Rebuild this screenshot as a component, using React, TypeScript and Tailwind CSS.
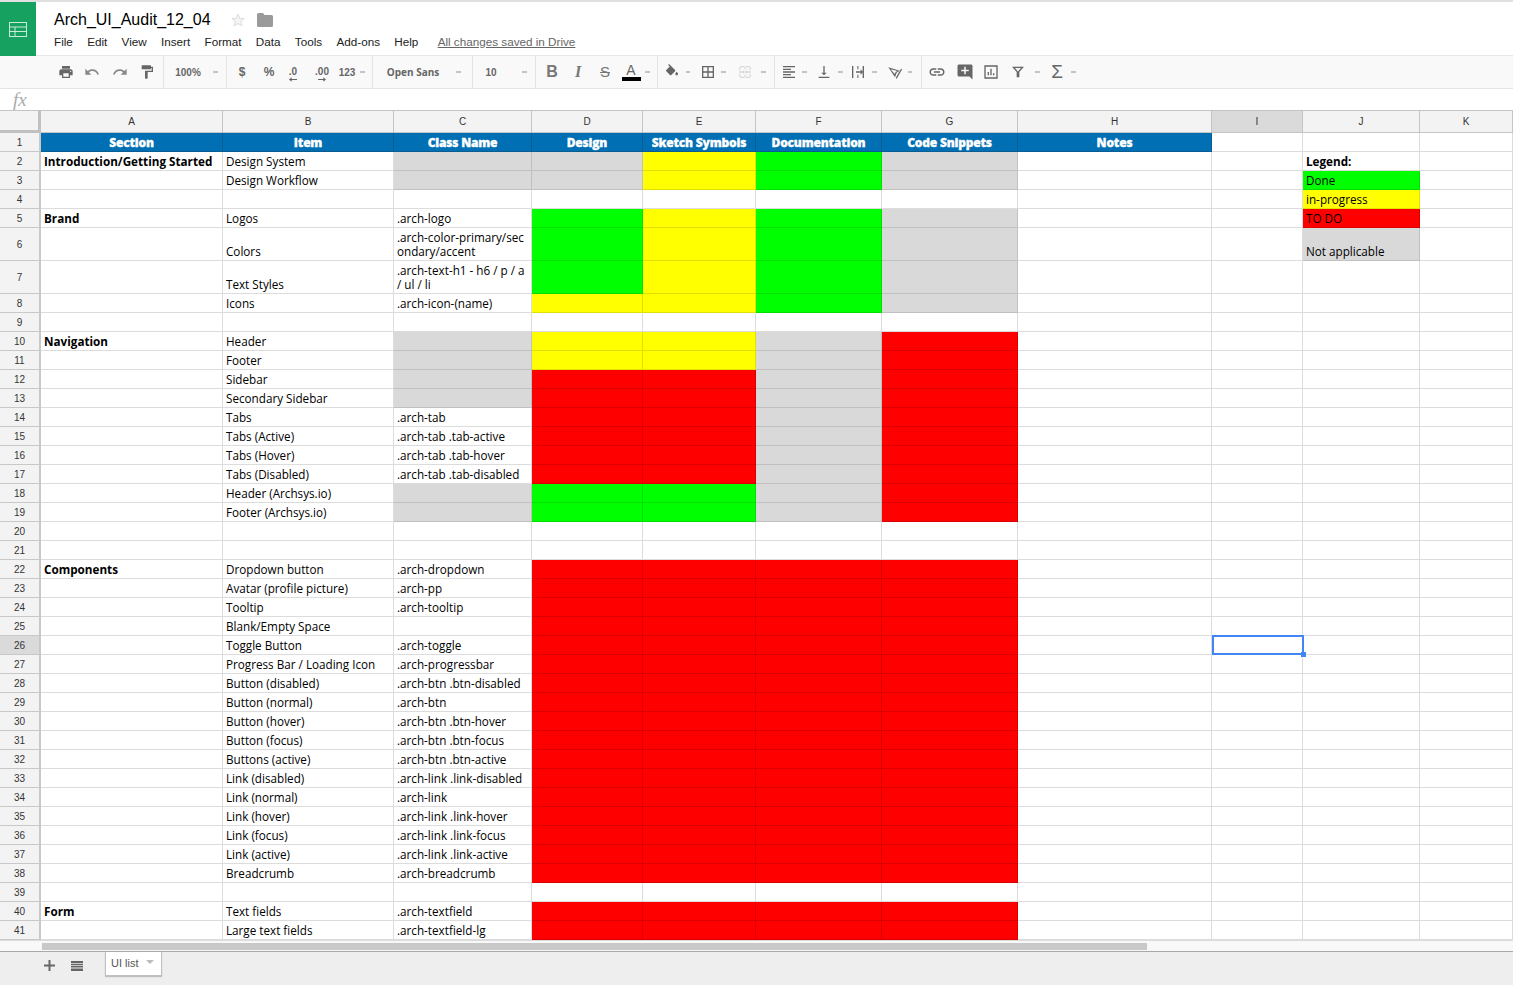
import React from "react";

type C = "" | "g" | "y" | "r" | "n";
type Row = { h?: boolean; s?: string; i?: string; c?: string; cc?: C; f?: [C, C, C, C] };

const R4: [C, C, C, C] = ["r", "r", "r", "r"];
const RN: [C, C, C, C] = ["r", "r", "n", "r"];
const GYGN: [C, C, C, C] = ["g", "y", "g", "n"];
const rows: Row[] = [
  { s: "Introduction/Getting Started", i: "Design System", cc: "n", f: ["n", "y", "g", "n"] },
  { i: "Design Workflow", cc: "n", f: ["n", "y", "g", "n"] },
  {},
  { s: "Brand", i: "Logos", c: ".arch-logo", f: GYGN },
  { h: true, i: "Colors", c: ".arch-color-primary/secondary/accent", f: GYGN },
  { h: true, i: "Text Styles", c: ".arch-text-h1 - h6 / p / a / ul / li", f: GYGN },
  { i: "Icons", c: ".arch-icon-(name)", f: ["y", "y", "g", "n"] },
  {},
  { s: "Navigation", i: "Header", cc: "n", f: ["y", "y", "n", "r"] },
  { i: "Footer", cc: "n", f: ["y", "y", "n", "r"] },
  { i: "Sidebar", cc: "n", f: RN },
  { i: "Secondary Sidebar", cc: "n", f: RN },
  { i: "Tabs", c: ".arch-tab", f: RN },
  { i: "Tabs (Active)", c: ".arch-tab .tab-active", f: RN },
  { i: "Tabs (Hover)", c: ".arch-tab .tab-hover", f: RN },
  { i: "Tabs (Disabled)", c: ".arch-tab .tab-disabled", f: RN },
  { i: "Header (Archsys.io)", cc: "n", f: ["g", "g", "n", "r"] },
  { i: "Footer (Archsys.io)", cc: "n", f: ["g", "g", "n", "r"] },
  {},
  {},
  { s: "Components", i: "Dropdown button", c: ".arch-dropdown", f: R4 },
  { i: "Avatar (profile picture)", c: ".arch-pp", f: R4 },
  { i: "Tooltip", c: ".arch-tooltip", f: R4 },
  { i: "Blank/Empty Space", f: R4 },
  { i: "Toggle Button", c: ".arch-toggle", f: R4 },
  { i: "Progress Bar / Loading Icon", c: ".arch-progressbar", f: R4 },
  { i: "Button (disabled)", c: ".arch-btn .btn-disabled", f: R4 },
  { i: "Button (normal)", c: ".arch-btn", f: R4 },
  { i: "Button (hover)", c: ".arch-btn .btn-hover", f: R4 },
  { i: "Button (focus)", c: ".arch-btn .btn-focus", f: R4 },
  { i: "Buttons (active)", c: ".arch-btn .btn-active", f: R4 },
  { i: "Link (disabled)", c: ".arch-link .link-disabled", f: R4 },
  { i: "Link (normal)", c: ".arch-link", f: R4 },
  { i: "Link (hover)", c: ".arch-link .link-hover", f: R4 },
  { i: "Link (focus)", c: ".arch-link .link-focus", f: R4 },
  { i: "Link (active)", c: ".arch-link .link-active", f: R4 },
  { i: "Breadcrumb", c: ".arch-breadcrumb", f: R4 },
  {},
  { s: "Form", i: "Text fields", c: ".arch-textfield", f: R4 },
  { i: "Large text fields", c: ".arch-textfield-lg", f: R4 },
];

const legend: Record<number, { t: string; c: C; b?: boolean }> = {
  2: { t: "Legend:", c: "", b: true },
  3: { t: "Done", c: "g" },
  4: { t: "in-progress", c: "y" },
  5: { t: "TO DO", c: "r" },
  6: { t: "Not applicable", c: "n" },
};

const fill: Record<C, string> = {
  "": "bg-white border-[#dcdcdc]",
  g: "bg-[#00ff00] border-[#00e000]",
  y: "bg-[#ffff00] border-[#e0e000]",
  r: "bg-[#ff0000] border-[#d80000]",
  n: "bg-[#d9d9d9] border-[#c0c0c0]",
};

const sans = "font-['Liberation_Sans',Arial,sans-serif]";
const open = "font-['Open_Sans',sans-serif]";

function Cell({ c = "", bold, wrap, children }: { c?: C; bold?: boolean; wrap?: boolean; children?: React.ReactNode }) {
  return (
    <div
      className={`${fill[c]} border-r border-b flex items-end pl-[3px] pr-[2px] text-[11.7px] leading-[14px] pb-[2px] text-black overflow-hidden ${open} ${
        bold ? "font-bold whitespace-nowrap" : wrap ? "break-all" : "whitespace-nowrap"
      }`}
    >
      <span className="block">{children}</span>
    </div>
  );
}

function Head({ children }: { children: React.ReactNode }) {
  return (
    <div className="bg-[#f3f3f3] border-r-2 border-b border-[#c8c8c8] flex items-center justify-center text-[10px] text-[#333] font-['Liberation_Sans',Arial,sans-serif]">
      {children}
    </div>
  );
}

function Ic({ d, className = "fill-[#666]", size = 16 }: { d: string; className?: string; size?: number }) {
  return (
    <svg viewBox="0 0 24 24" width={size} height={size} className={className}>
      <path d={d} fillRule="evenodd" />
    </svg>
  );
}

function Slot({ className, children }: { className: string; children?: React.ReactNode }) {
  return <div className={`flex items-center justify-center shrink-0 h-full ${className}`}>{children}</div>;
}

const Dash = () => <span className="block w-[5px] h-[2px] bg-[#c4c4c4]" />;
const Sep = () => <div className="w-px h-[32px] bg-[#e4e4e4] shrink-0" />;
const tb = `text-[10px] font-bold text-[#666] whitespace-nowrap ${sans}`;

function Toolbar() {
  return (
    <div className="h-[33px] bg-[#f9f9f9] border-b border-[#e4e4e4] flex items-start pl-[53px] shrink-0">
      <div className="flex items-center h-[32px]">
        <Slot className="w-[26px]"><Ic d="M19 8H5c-1.66 0-3 1.34-3 3v6h4v4h12v-4h4v-6c0-1.66-1.34-3-3-3zm-3 11H8v-5h8v5zm3-7c-.55 0-1-.45-1-1s.45-1 1-1 1 .45 1 1-.45 1-1 1zm-1-9H6v4h12V3z" /></Slot>
        <Slot className="w-[26px]"><Ic d="M12.5 8c-2.65 0-5.05.99-6.9 2.6L2 7v9h9l-3.62-3.62c1.39-1.16 3.16-1.88 5.12-1.88 3.54 0 6.55 2.31 7.6 5.5l2.37-.78C21.08 11.03 17.15 8 12.5 8z" className="fill-[#888]" /></Slot>
        <Slot className="w-[29px]"><Ic d="M18.4 10.6C16.55 8.99 14.15 8 11.5 8c-4.65 0-8.58 3.03-9.96 7.22L3.9 16c1.05-3.19 4.05-5.5 7.6-5.5 1.95 0 3.73.72 5.12 1.88L13 16h9V7l-3.6 3.6z" className="fill-[#888]" /></Slot>
        <Slot className="w-[26px]"><Ic d="M18 4V3c0-.55-.45-1-1-1H5c-.55 0-1 .45-1 1v4c0 .55.45 1 1 1h12c.55 0 1-.45 1-1V6h1v4H9v11c0 .55.45 1 1 1h2c.55 0 1-.45 1-1v-9h8V4h-3z" /></Slot>
        <div className="w-[3px]" />
        <Sep />
        <Slot className={`w-[48px] ${tb}`}>100%</Slot>
        <Slot className="w-[6px]"><Dash /></Slot>
        <div className="w-[8px]" />
        <Sep />
        <Slot className={`w-[30px] text-[12px] ${tb}`}>$</Slot>
        <Slot className={`w-[24px] text-[12px] ${tb}`}>%</Slot>
        <Slot className={`w-[24px] flex-col pt-[5px] ${tb}`}>
          <span className="leading-[10px]">.0</span>
          <svg width="8" height="5" viewBox="0 0 9 5" className="fill-[#666]"><path d="M0 2.5 3 0v2h6v1H3v2z" /></svg>
        </Slot>
        <Slot className={`w-[34px] flex-col pt-[5px] ${tb}`}>
          <span className="leading-[10px]">.00</span>
          <svg width="8" height="5" viewBox="0 0 9 5" className="fill-[#666]"><path d="M9 2.5 6 0v2H0v1h6v2z" /></svg>
        </Slot>
        <Slot className={`w-[16px] ${tb}`}>123</Slot>
        <Slot className="w-[14px]"><Dash /></Slot>
        <div className="w-[3px]" />
        <Sep />
        <Slot className={`w-[80px] ${tb}`}><span className={`${open} text-[10px]`}>Open Sans</span></Slot>
        <Slot className="w-[10px]"><Dash /></Slot>
        <div className="w-[9px]" />
        <Sep />
        <Slot className={`w-[36px] ${tb}`}>10</Slot>
        <div className="w-[10px]" />
        <Slot className="w-[10px]"><Dash /></Slot>
        <div className="w-[6px]" />
        <Sep />
        <Slot className="w-[32px] text-[16px] font-bold text-[#777]"><span className={sans}>B</span></Slot>
        <Slot className="w-[20px] text-[16px] italic font-bold text-[#777]"><span className="font-['Liberation_Serif',serif]">I</span></Slot>
        <Slot className="w-[34px] text-[15px] text-[#777] line-through"><span className={sans}>S</span></Slot>
        <Slot className="w-[18px] flex-col text-[#666]">
          <span className={`${sans} text-[14px] leading-[14px]`}>A</span>
          <span className="block w-[19px] h-[4px] bg-black" />
        </Slot>
        <Slot className="w-[14px]"><Dash /></Slot>
        <div className="w-[3px]" />
        <Sep />
        <Slot className="w-[28px]"><Ic d="M16.56 8.94L7.62 0 6.21 1.41l2.38 2.38-5.15 5.15c-.59.59-.59 1.54 0 2.12l5.5 5.5c.29.29.68.44 1.06.44s.77-.15 1.06-.44l5.5-5.5c.59-.58.59-1.53 0-2.12zM19 11.5s-2 2.17-2 3.5c0 1.1.9 2 2 2s2-.9 2-2c0-1.33-2-3.5-2-3.5z" /></Slot>
        <Slot className="w-[4px]"><Dash /></Slot>
        <Slot className="w-[16px] ml-[10px]"><Ic d="M3 3v18h18V3H3zm8 16H5v-6h6v6zm0-8H5V5h6v6zm8 8h-6v-6h6v6zm0-8h-6V5h6v6z" /></Slot>
        <Slot className="w-[14px]"><Dash /></Slot>
        <Slot className="w-[30px]"><Ic d="M3 3h18v2H3zM3 19h18v2H3zM3 3h2v6H3zM3 15h2v6H3zM19 3h2v6h-2zM19 15h2v6h-2zM11 3h2v5h-2zM11 16h2v5h-2zM3 11h6V9l3 3-3 3v-2H3zM21 11h-6V9l-3 3 3 3v-2h6z" className="fill-[#d8d8d8]" /></Slot>
        <Slot className="w-[6px]"><Dash /></Slot>
        <div className="w-[8px]" />
        <Sep />
        <Slot className="w-[16px] ml-[6px]"><Ic d="M3 3h18v2H3zM3 7h12v2H3zM3 11h18v2H3zM3 15h12v2H3zM3 19h18v2H3z" /></Slot>
        <Slot className="w-[14px]"><Dash /></Slot>
        <Slot className="w-[26px]"><Ic d="M16 13h-3V3h-2v10H8l4 4 4-4zM4 19v2h16v-2H4z" /></Slot>
        <Slot className="w-[6px]"><Dash /></Slot>
        <Slot className="w-[16px] ml-[7px]"><Ic d="M3 3h2v18H3zM19 3h2v18h-2zM11 3h1.600v5H11zM11 16h1.600v5H11zM9 11h7V8l4 4-4 4v-3H9z" /></Slot>
        <Slot className="w-[16px]"><Dash /></Slot>
        <Slot className="w-[26px]"><Ic d="M2 5l17 5-4.5 3L12 20zM5.5 8l6 7 1.5-3 2.5-1.5zM13 21L21 7l1.700 1-8 14z" /></Slot>
        <Slot className="w-[4px]"><Dash /></Slot>
        <div className="w-[9px]" />
        <Sep />
        <Slot className="w-[30px]"><Ic d="M3.9 12c0-1.71 1.39-3.1 3.1-3.1h4V7H7c-2.76 0-5 2.24-5 5s2.24 5 5 5h4v-1.9H7c-1.71 0-3.1-1.39-3.1-3.1zM8 13h8v-2H8v2zm9-6h-4v1.9h4c1.71 0 3.1 1.39 3.1 3.1s-1.39 3.1-3.1 3.1h-4V17h4c2.76 0 5-2.24 5-5s-2.24-5-5-5z" size={18} /></Slot>
        <Slot className="w-[26px]"><Ic d="M20 2H4c-1.1 0-2 .9-2 2v12c0 1.1.9 2 2 2h14l4 4V4c0-1.1-.9-2-2-2zm-3 9h-4v4h-2v-4H7V9h4V5h2v4h4v2z" size={18} /></Slot>
        <Slot className="w-[26px]"><Ic d="M2 2h20v20H2zM4 4v16h16V4zM7 12h2v5H7zM11 7h2v10h-2zM15 14h2v3h-2z" /></Slot>
        <Slot className="w-[28px]"><Ic d="M3 4h18l-7 8v8h-4v-8zM7.5 6l4.5 5.2L16.5 6z" /></Slot>
        <Slot className="w-[10px]"><Dash /></Slot>
        <Slot className="w-[16px] ml-[7px] text-[19px] text-[#666]"><span className={sans}>Σ</span></Slot>
        <Slot className="w-[16px]"><Dash /></Slot>
      </div>
    </div>
  );
}

const menus = ["File", "Edit", "View", "Insert", "Format", "Data", "Tools", "Add-ons", "Help"];
const cols = ["A", "B", "C", "D", "E", "F", "G", "H", "I", "J", "K"];
const titles = ["Section", "Item", "Class Name", "Design", "Sketch Symbols", "Documentation", "Code Snippets", "Notes"];

export default function App() {
  return (
    <div className={`w-[1513px] h-[985px] overflow-hidden flex flex-col bg-white ${sans}`}>
      <div className="h-[56px] shrink-0 border-t-2 border-[#e0e0e0] border-b border-b-[#e8e8e8] flex">
        <div className="w-[36px] h-[54px] bg-[#16a160] flex items-center justify-center shrink-0">
          <svg width="18" height="15" viewBox="0 0 18 15" fill="none" stroke="#c9ecd9" strokeWidth="1">
            <rect x="0.5" y="0.5" width="17" height="14" />
            <path d="M0.5 5h17M0.5 9.5h17M6 5v9.5" />
          </svg>
        </div>
        <div className="pl-[18px] flex flex-col">
          <div className="flex items-center h-[33px] pt-[2px]">
            <span className="text-[16px] text-black leading-none">Arch_UI_Audit_12_04</span>
            <svg width="14" height="14" viewBox="0 0 24 24" className="ml-[20px] fill-[#f4f4f4] stroke-[#d8d8d8]" strokeWidth="1.5">
              <path d="M12 2l3 7 7.5.6-5.7 5 1.8 7.4L12 18l-6.6 4 1.8-7.4-5.7-5L9 9z" />
            </svg>
            <svg width="16" height="14" viewBox="0 0 16 14" className="ml-[12px] fill-[#9a9a9a]">
              <path d="M0 1.5A1.5 1.5 0 0 1 1.5 0H6l1.5 2H14.5A1.5 1.5 0 0 1 16 3.500V12.500A1.500 1.500 0 0 1 14.500 14H1.500A1.500 1.500 0 0 1 0 12.500z" />
            </svg>
          </div>
          <div className="flex items-center gap-[14.3px] text-[11.7px] text-[#222] leading-[14px]">
            {menus.map((m) => (
              <span key={m}>{m}</span>
            ))}
            <span className="ml-[5px] text-[#666] underline">All changes saved in Drive</span>
          </div>
        </div>
      </div>

      <Toolbar />

      <div className="h-[22px] shrink-0 border-b border-[#c4c4c4] bg-white flex items-center pl-[13px]">
        <span className="font-['Liberation_Serif',serif] italic text-[19px] text-[#aaa] leading-none">fx</span>
      </div>

      <div className="grid shrink-0 grid-cols-[41px_182px_171px_138px_111px_113px_126px_136px_194px_91px_117px_93px] grid-rows-[22px_19px_19px_19px_19px_19px_33px_33px_repeat(33,19px)_19px]">
        <div className="bg-[#f3f3f3] border-r-[3px] border-b-[3px] border-[#c0c0c0]" />
        {cols.map((c) => (
          <div
            key={c}
            className={`${c === "I" ? "bg-[#dadada]" : "bg-[#f3f3f3]"} border-r border-b border-[#c4c4c4] flex items-center justify-center text-[10px] text-[#333]`}
          >
            {c}
          </div>
        ))}

        <Head>1</Head>
        {titles.map((t) => (
          <div
            key={t}
            className={`bg-[#016fb3] border-r border-b border-[#0a5d93] flex items-center justify-center pt-[1px] text-[12px] text-white font-extrabold tracking-[-0.2px] [-webkit-text-stroke:0.3px_white] ${open}`}
          >
            {t}
          </div>
        ))}
        <Cell />
        <Cell />
        <Cell />

        {rows.map((r, idx) => {
          const n = idx + 2;
          const l = legend[n];
          return (
            <React.Fragment key={n}>
              <div
                className={`${n === 26 ? "bg-[#dadada]" : "bg-[#f3f3f3]"} border-r-2 border-b border-[#c8c8c8] flex items-center justify-center text-[10px] text-[#333]`}
              >
                {n}
              </div>
              <Cell bold>{r.s}</Cell>
              <Cell>{r.i}</Cell>
              <Cell c={r.cc ?? ""} wrap={r.h}>{r.c}</Cell>
              {(r.f ?? (["", "", "", ""] as C[])).map((c, i) => (
                <Cell key={i} c={c} />
              ))}
              <Cell />
              <div className="relative bg-white border-r border-b border-[#dcdcdc]">
                {n === 26 && (
                  <div className="absolute z-10 left-0 top-[-1px] w-[92px] h-[20px] border-2 border-[#4285f4]">
                    <div className="absolute right-[-4px] bottom-[-4px] w-[5px] h-[5px] bg-[#4285f4]" />
                  </div>
                )}
              </div>
              {l ? <Cell c={l.c} bold={l.b}>{l.t}</Cell> : <Cell />}
              <Cell />
            </React.Fragment>
          );
        })}
      </div>

      <div className="h-[11px] shrink-0 bg-[#f8f8f8] border-t border-[#dcdcdc] flex pl-[42px] pt-[2px]">
        <div className="w-[1105px] h-[7px] bg-[#c8c8c8]" />
      </div>

      <div className="flex-1 bg-[#eeeeee] border-t border-[#a8a8a8] flex items-start">
        <div className="w-[42px] shrink-0" />
        <div className="w-[14px] h-[27px] flex items-center justify-center text-[#666] shrink-0">
          <svg width="11" height="11" viewBox="0 0 11 11" className="fill-[#666]"><path d="M4.500 0h2v4.500H11v2H6.500V11h-2V6.500H0v-2h4.500z" /></svg>
        </div>
        <div className="w-[14px] shrink-0" />
        <div className="w-[14px] h-[27px] flex items-center justify-center shrink-0">
          <svg width="12" height="10" viewBox="0 0 12 10" className="fill-[#666]"><path d="M0 0h12v2H0zM0 2.700h12v1.500H0zM0 5h12v1.500H0zM0 7.500h12V10H0z" /></svg>
        </div>
        <div className="w-[21px] shrink-0" />
        <div className="w-[57px] h-[24px] bg-white border border-t-0 border-[#c0c0c0] shadow-[0_1px_1px_rgba(0,0,0,0.2)] flex items-center pl-[5px] gap-[7px] text-[11px] text-[#555]">
          <span>UI list</span>
          <svg width="8" height="4" viewBox="0 0 8 4" className="fill-[#bbb] mb-[3px]"><path d="M0 0h8L4 4z" /></svg>
        </div>
      </div>
    </div>
  );
}
